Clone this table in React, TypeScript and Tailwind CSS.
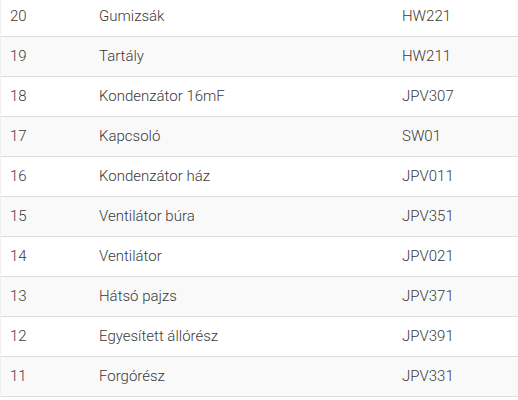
const parts = [
  { no: "20", name: "Gumizsák", code: "HW221" },
  { no: "19", name: "Tartály", code: "HW211" },
  { no: "18", name: "Kondenzátor 16mF", code: "JPV307" },
  { no: "17", name: "Kapcsoló", code: "SW01" },
  { no: "16", name: "Kondenzátor ház", code: "JPV011" },
  { no: "15", name: "Ventilátor búra", code: "JPV351" },
  { no: "14", name: "Ventilátor", code: "JPV021" },
  { no: "13", name: "Hátsó pajzs", code: "JPV371" },
  { no: "12", name: "Egyesített állórész", code: "JPV391" },
  { no: "11", name: "Forgórész", code: "JPV331" },
]

export default function App() {
  return (
    <div className="w-[518px] h-[400px] overflow-hidden bg-white font-['Roboto',sans-serif] text-[15px] font-light text-[#3a3a3a]">
      <div className="-mt-[3px] border-l border-[#f0f0f0]">
        {parts.map((p, i) => (
          <div
            key={p.no}
            className={
              "flex items-center h-10 border-b border-[#dddddd] " +
              (i % 2 === 1 ? "bg-[#f9f9f9]" : "bg-white")
            }
          >
            <div className="w-[98px] pl-[9px]">{p.no}</div>
            <div className="w-[303px]">{p.name}</div>
            <div className="flex-1">{p.code}</div>
          </div>
        ))}
      </div>
    </div>
  )
}
